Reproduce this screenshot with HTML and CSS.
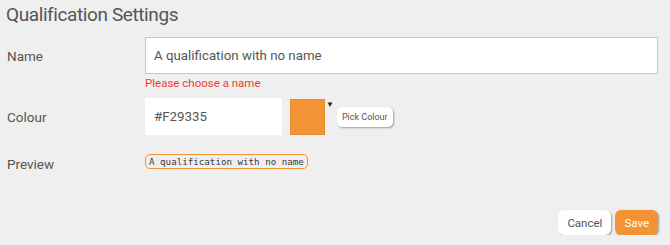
FILE: index.html
```html
<!DOCTYPE html>
<html lang="en">
<head>
    <meta charset="UTF-8">
    <title>Qualification Settings</title>
    <link rel="stylesheet" href="styles.css">
</head>
<body>
    <h1 class="title">Qualification Settings</h1>

    <div class="form">
        <label class="label" for="qualName">Name</label>
        <input id="qualName" class="text-input invalid" type="text" value="A qualification with no name">

        <div class="error">Please choose a name</div>

        <label class="label row-colour" for="qualColour">Colour</label>
        <div class="colour-field row-colour">
            <input id="qualColour" class="text-input colour-input" type="text" value="#F29335">
            <div class="swatch"></div>
            <span class="caret">&#9660;</span>
            <button class="small-button">Pick Colour</button>
        </div>

        <div class="label row-preview">Preview</div>
        <div class="row-preview">
            <span class="chip">A qualification with no name</span>
        </div>
    </div>

    <div class="actions">
        <button class="button">Cancel</button>
        <button class="button button-primary">Save</button>
    </div>
</body>
</html>
```

FILE: styles.css
```css
body {
    margin: 0;
    padding: 0 12px 0 7px;
    background: #efefef;
    color: #555;
    font-family: Roboto, 'Liberation Sans', sans-serif;
}
.title {
    font-size: 19px;
    font-weight: 400;
    letter-spacing: -0.4px;
    line-height: 30px;
    margin: 0 0 0 -1px;
    color: #555;
}
.form {
    display: grid;
    grid-template-columns: 138px 1fr;
    align-items: center;
    margin-top: 7px;
}
.label {
    font-size: 13.5px;
    color: #555;
}
.text-input {
    box-sizing: border-box;
    width: 100%;
    height: 37px;
    border: 1px solid #fff;
    background: white;
    padding: 0 8px;
    font-family: inherit;
    font-size: 13.3px;
    color: #555;
    outline: none;
}
.text-input.invalid {
    border-color: #f6b3ad;
}
.error {
    grid-column: 2;
    color: #f33c33;
    font-size: 11.5px;
    line-height: 14px;
    margin-top: 2px;
}
.row-colour {
    margin-top: 8px;
}
.row-preview {
    margin-top: 19px;
}
.colour-field {
    display: flex;
    align-items: flex-start;
}
.colour-input {
    width: 137px;
}
.swatch {
    box-sizing: border-box;
    width: 35px;
    height: 36px;
    margin: 1px 0 0 8px;
    background: #f29335;
    border: 1px solid #e88a2e;
}
.caret {
    font-size: 8px;
    line-height: 10px;
    color: #222;
    margin: 2px 0 0 1px;
}
.small-button {
    margin: 9px 0 0 3px;
    height: 20px;
    padding: 0 5px;
    background: white;
    border: none;
    border-radius: 5px;
    box-shadow: 1px 1px 2px rgba(0, 0, 0, 0.35);
    font-family: inherit;
    font-size: 9px;
    color: #555;
}
.chip {
    display: inline-block;
    vertical-align: top;
    padding: 0 3px;
    border: 1.5px solid #f29335;
    border-radius: 5px;
    font-family: 'DejaVu Sans Mono', monospace;
    font-size: 9.2px;
    line-height: 13px;
    color: #3a3a3a;
}
.actions {
    display: flex;
    justify-content: flex-end;
    gap: 4px;
    margin-top: 37px;
}
.button {
    height: 25px;
    padding: 0 9px;
    background: white;
    border: none;
    border-radius: 6px;
    box-shadow: 1px 1px 2px rgba(0, 0, 0, 0.35);
    font-family: inherit;
    font-size: 11.5px;
    color: #555;
}
.button-primary {
    background: #f29335;
    color: white;
}
```
